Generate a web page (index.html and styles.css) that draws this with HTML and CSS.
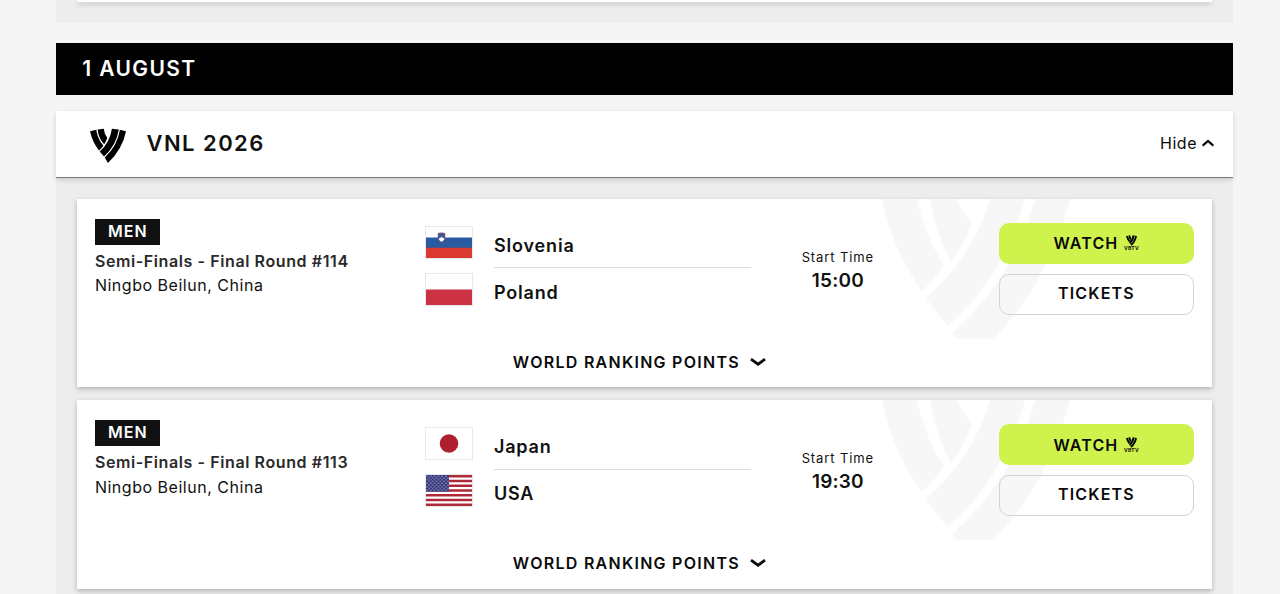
FILE: index.html
```html
<!DOCTYPE html>
<html lang="en">
<head>
  <meta charset="UTF-8">
  <meta name="viewport" content="width=device-width, initial-scale=1.0">
  <title>Match Schedule</title>
  <link rel="stylesheet" href="styles.css">
</head>
<body>
  <!-- Shared shapes -->
  <svg class="defs" width="0" height="0">
    <symbol id="logo" viewBox="0 0 36 35">
      <path d="M0 3.2L6.3 1.7Q7.5 11 13.4 17.7Q11.5 20.2 9 22.6Q2.5 14 0 3.2z"/>
      <path d="M7.6 1.4L13.8.7Q14.2 6 17.3 9.7Q16.2 13 14.2 16.3Q8.4 10 7.6 1.4z"/>
      <path d="M21.9.7L28.8 1.5Q26.5 17 14 28.6L9.7 23.6Q19.9 14.5 21.9.7z"/>
      <path d="M29.9 1.7L36 3.2Q32.5 21 18 35L14.7 29.5Q27.6 17.5 29.9 1.7z"/>
    </symbol>
    <symbol id="watermark" viewBox="0 0 192 140">
      <path d="M2 0Q12 50 42 92Q54 81 64 66Q46 40 37 0z"/>
      <path d="M50 0Q56 36 71 63Q84 46 92 24Q82 12 77 0z"/>
      <path d="M110 0Q94 56 46 99L67 127Q122 82 145 0z"/>
      <path d="M155 0Q134 80 72 134L77 140H113Q165 90 190 0z"/>
    </symbol>
    <pattern id="stars" width="3.8" height="3.6" patternUnits="userSpaceOnUse">
      <circle cx="1" cy="1" r=".65" fill="#fff"/>
      <circle cx="2.9" cy="2.8" r=".65" fill="#fff"/>
    </pattern>
  </svg>

  <main class="schedule">
    <!-- Previous day -->
    <section class="matches previous">
      <article class="card"></article>
    </section>

    <h2 class="date">1 AUGUST</h2>

    <header class="competition">
      <svg class="logo"><use href="#logo"/></svg>
      <h3>VNL 2026</h3>
      <button class="toggle">Hide
        <svg width="12" height="8" viewBox="0 0 12 8"><path d="M.7 6.7L6 2L11.3 6.7"/></svg>
      </button>
    </header>

    <section class="matches">
      <article class="card">
        <svg class="watermark"><use href="#watermark"/></svg>
        <div class="match">
          <div class="info">
            <span class="gender">MEN</span>
            <strong>Semi-Finals - Final Round #114</strong>
            <span>Ningbo Beilun, China</span>
          </div>
          <div class="teams">
            <div class="team">
              <svg class="flag" viewBox="0 0 46 31">
                <path fill="#fff" d="M0 0h46v11H0z"/>
                <path fill="#2a5a9f" d="M0 10.5h46V21H0z"/>
                <path fill="#db3a32" d="M0 20.8h46V31H0z"/>
                <path fill="#3d5791" stroke="#b55a68" stroke-width=".5" d="M12 6.2q3.5-1 7 0v4.2q0 3.6-3.5 5.2q-3.5-1.6-3.5-5.2z"/>
                <path fill="#fff" d="M12.8 12.2l1.3-1.7.8.6.7-1.8.8 1.8.8-.6 1.1 1.7q-1 1.7-2.7 2.6-1.8-.9-2.8-2.6z"/>
              </svg>
              <span class="name">Slovenia</span>
            </div>
            <div class="team">
              <svg class="flag" viewBox="0 0 46 31">
                <path fill="#fff" d="M0 0h46v16H0z"/>
                <path fill="#cb3244" d="M0 15.5h46V31H0z"/>
              </svg>
              <span class="name">Poland</span>
            </div>
          </div>
          <div class="start">
            <span>Start Time</span>
            <strong>15:00</strong>
          </div>
          <div class="actions">
            <button class="watch">WATCH
              <span class="vbtv"><svg><use href="#logo"/></svg><small>VBTV</small></span>
            </button>
            <button class="tickets">TICKETS</button>
          </div>
        </div>
        <button class="ranking">WORLD RANKING POINTS
          <svg width="16" height="10" viewBox="0 0 16 10"><path d="M1 2.2L8 7.2L15 2.2"/></svg>
        </button>
      </article>

      <article class="card">
        <svg class="watermark"><use href="#watermark"/></svg>
        <div class="match">
          <div class="info">
            <span class="gender">MEN</span>
            <strong>Semi-Finals - Final Round #113</strong>
            <span>Ningbo Beilun, China</span>
          </div>
          <div class="teams">
            <div class="team">
              <svg class="flag" viewBox="0 0 46 31">
                <path fill="#fff" d="M0 0h46v31H0z"/>
                <circle cx="23" cy="15.5" r="9.3" fill="#ae202d"/>
              </svg>
              <span class="name">Japan</span>
            </div>
            <div class="team">
              <svg class="flag" viewBox="0 0 46 31">
                <path fill="#fff" d="M0 0h46v31H0z"/>
                <path stroke="#ae2a38" stroke-width="2.4" d="M0 1.2h46M0 5.97h46M0 10.74h46M0 15.5h46M0 20.27h46M0 25.04h46M0 29.8h46"/>
                <path fill="#30347a" d="M0 0h23v16.7H0z"/>
                <path fill="url(#stars)" d="M0 0h23v16.7H0z"/>
              </svg>
              <span class="name">USA</span>
            </div>
          </div>
          <div class="start">
            <span>Start Time</span>
            <strong>19:30</strong>
          </div>
          <div class="actions">
            <button class="watch">WATCH
              <span class="vbtv"><svg><use href="#logo"/></svg><small>VBTV</small></span>
            </button>
            <button class="tickets">TICKETS</button>
          </div>
        </div>
        <button class="ranking">WORLD RANKING POINTS
          <svg width="16" height="10" viewBox="0 0 16 10"><path d="M1 2.2L8 7.2L15 2.2"/></svg>
        </button>
      </article>
    </section>
  </main>
</body>
</html>
```
FILE: styles.css
```css
* {
  box-sizing: border-box;
}
body {
  margin: 0;
  height: 594px;
  overflow: hidden;
  background-color: #f5f5f5;
  color: #111;
  font-family: Inter, "Liberation Sans", sans-serif;
}
h2, h3 {
  margin: 0;
  font-weight: 600;
}
button {
  margin: 0;
  padding: 0;
  border: 0;
  background: none;
  color: #0b0b0b;
  font-family: inherit;
  cursor: pointer;
}
.defs {
  position: absolute;
}
.schedule {
  width: 1176.4px;
  margin-left: 56.2px;
}
.matches {
  display: flex;
  flex-direction: column;
  gap: 13px;
  padding: 21px 20.7px;
  background-color: #ededed;
}
.matches.previous {
  height: 23px;
  padding-top: 0;
}
.previous .card {
  height: 2.5px;
}
.date {
  display: flex;
  align-items: center;
  height: 51.4px;
  margin: 20.4px 0 16.2px;
  padding: 0 0 1px 26px;
  background-color: #000;
  color: #fff;
  font-size: 21px;
  letter-spacing: 1.4px;
}
.competition {
  position: relative;
  display: flex;
  align-items: center;
  height: 67px;
  padding: 0 18.6px 2px 33.8px;
  background-color: #fff;
  border-bottom: 1px solid #777;
  box-shadow: 0 2px 5px rgba(0, 0, 0, 0.14);
}
.logo {
  width: 36px;
  height: 35px;
  margin-top: 5px;
}
.competition h3 {
  margin-left: 20.5px;
  font-size: 22px;
  letter-spacing: 1.45px;
}
.toggle {
  display: flex;
  align-items: center;
  gap: 5px;
  margin-left: auto;
  font-size: 16px;
  letter-spacing: 0.5px;
}
.toggle path, .ranking path {
  fill: none;
  stroke: #0b0b0b;
  stroke-width: 2.3;
}
.card {
  position: relative;
  height: 188.4px;
  background-color: #fff;
  box-shadow: 0 2px 5px rgba(0, 0, 0, 0.25);
}
/* faded emblem behind the card content */
.watermark {
  position: absolute;
  top: 0;
  left: 803px;
  width: 192px;
  height: 140px;
  fill: #f7f7f7;
}
.match {
  position: relative;
  display: grid;
  grid-template-columns: 330px 326px 174px 1fr;
  height: 149px;
  padding: 20px 18px 0;
}
.info {
  display: flex;
  flex-direction: column;
  align-items: flex-start;
  font-size: 16px;
  line-height: 24.5px;
  letter-spacing: 0.52px;
  white-space: nowrap;
}
.info strong {
  margin-top: 4px;
  color: #292929;
  font-weight: 600;
  letter-spacing: 0.6px;
}
.gender {
  height: 26px;
  padding: 0 12px 0 13px;
  background-color: #111;
  color: #fff;
  font-weight: 600;
  letter-spacing: 1.1px;
}
.teams {
  padding-top: 7px;
}
.team {
  display: flex;
  height: 47px;
}
.flag {
  width: 48px;
  height: 33px;
  border: 1px solid #e8e8e8;
}
.name {
  width: 257px;
  height: 42.5px;
  margin-left: 21px;
  padding-top: 7px;
  font-size: 18px;
  font-weight: 600;
  line-height: 25px;
  letter-spacing: 0.85px;
}
.team:first-child .name {
  border-bottom: 1px solid #ddd;
}
.start {
  display: flex;
  flex-direction: column;
  align-items: center;
  padding-top: 28px;
  font-size: 13px;
  line-height: 20px;
  letter-spacing: 0.9px;
}
.start strong {
  margin-top: 1px;
  font-size: 19px;
  font-weight: 600;
  line-height: 25px;
  letter-spacing: 0.2px;
}
.actions {
  display: flex;
  flex-direction: column;
  justify-self: end;
  gap: 10px;
  width: 195px;
  padding-top: 4px;
}
.actions button {
  display: flex;
  justify-content: center;
  align-items: center;
  height: 41px;
  border-radius: 10px;
  font-size: 16px;
  font-weight: 600;
  letter-spacing: 1.15px;
}
.actions .watch {
  gap: 5px;
  background-color: #cff34c;
}
.actions .tickets {
  padding-bottom: 3px;
  border: 1px solid #d3d3d3;
}
.vbtv {
  display: flex;
  flex-direction: column;
  align-items: center;
  width: 16px;
}
.vbtv svg {
  width: 11px;
  height: 11px;
}
.vbtv small {
  font-size: 5px;
  font-weight: 700;
  line-height: 5px;
  letter-spacing: 0.3px;
}
.ranking {
  display: flex;
  align-items: center;
  gap: 10px;
  margin: 4px auto 0;
  padding-right: 10px;
  font-size: 16px;
  font-weight: 600;
  letter-spacing: 1.27px;
}
.ranking path {
  stroke-width: 2.8;
}
```
